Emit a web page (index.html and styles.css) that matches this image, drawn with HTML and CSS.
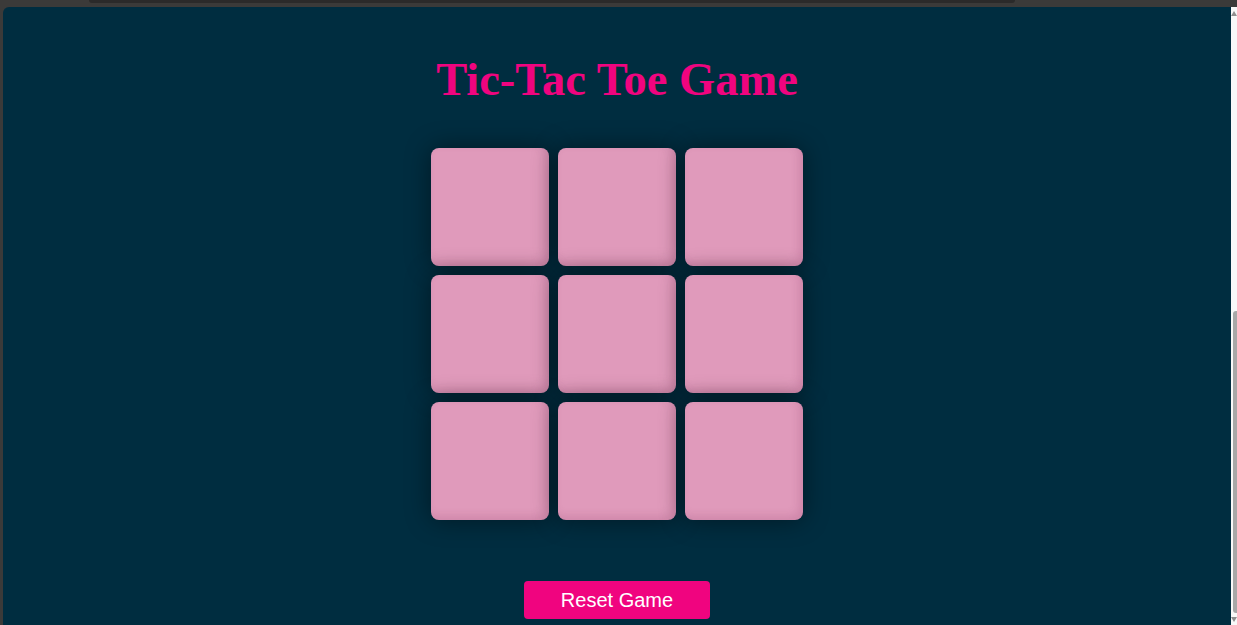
FILE: index.html
```html
<!DOCTYPE html>
<html>
<head>
<meta charset="utf-8">
<title>Tic-Tac Toe Game</title>
<link rel="stylesheet" href="styles.css">
</head>
<body>
<div class="chrome">
  <div class="tabstrip"><div class="tab"></div></div>
  <div class="window">
    <main class="viewport">
      <h1 class="title">Tic-Tac Toe Game</h1>
      <div class="board">
        <button class="cell"></button>
        <button class="cell"></button>
        <button class="cell"></button>
        <button class="cell"></button>
        <button class="cell"></button>
        <button class="cell"></button>
        <button class="cell"></button>
        <button class="cell"></button>
        <button class="cell"></button>
      </div>
      <button class="reset">Reset Game</button>
    </main>
    <div class="scrollbar">
      <div class="arrow-up"></div>
      <div class="track"><div class="thumb"></div></div>
      <div class="arrow-down"></div>
    </div>
  </div>
</div>
</body>
</html>
```

FILE: styles.css
```css
html, body {
  margin: 0;
  padding: 0;
  height: 100%;
  overflow: hidden;
}
body {
  background: #3b3a39;
}
.chrome {
  padding-left: 3px;
}
.tabstrip {
  height: 7px;
}
.tab {
  margin-left: 86px;
  width: 926px;
  height: 3px;
  background: #2b2a2a;
  border-radius: 0 0 8px 8px;
}
.window {
  display: flex;
  height: 618px;
}
.viewport {
  flex: 1;
  background: #002d40;
  border-top-left-radius: 6px;
  display: flex;
  flex-direction: column;
  align-items: center;
  overflow: hidden;
}
.title {
  margin: 47px 0 0;
  font-family: "Liberation Serif", "Times New Roman", serif;
  font-weight: bold;
  font-size: 46.5px;
  line-height: 52px;
  color: #f0047f;
}
.board {
  margin-top: 42px;
  display: grid;
  grid-template-columns: repeat(3, 118px);
  grid-auto-rows: 118px;
  gap: 9px;
}
.cell {
  border: none;
  padding: 0;
  border-radius: 8px;
  background: #e09abb;
  box-shadow: inset -4px -4px 8px rgba(120, 40, 80, 0.16), 0 0 26px rgba(0, 0, 0, 0.45);
}
.reset {
  margin-top: 61px;
  width: 186px;
  height: 38px;
  border: none;
  border-radius: 4px;
  background: #f0047f;
  color: #ffffff;
  font-family: "Liberation Sans", Arial, sans-serif;
  font-size: 20px;
  padding: 0;
}
.scrollbar {
  width: 6px;
  background: #f8f8f8;
  display: flex;
  flex-direction: column;
  align-items: flex-end;
}
.arrow-up {
  margin-top: 4px;
  width: 0;
  height: 0;
  border-left: 3px solid transparent;
  border-right: 3px solid transparent;
  border-bottom: 5px solid #8f8f8f;
}
.track {
  flex: 1;
  align-self: stretch;
  padding-top: 295px;
  padding-bottom: 4px;
  display: flex;
}
.thumb {
  flex: 1;
  margin-left: 2px;
  background: #a8a8a8;
  border-radius: 3px 0 0 3px;
}
.arrow-down {
  margin-bottom: 3px;
  width: 0;
  height: 0;
  border-left: 3px solid transparent;
  border-right: 3px solid transparent;
  border-top: 5px solid #8f8f8f;
}
```
